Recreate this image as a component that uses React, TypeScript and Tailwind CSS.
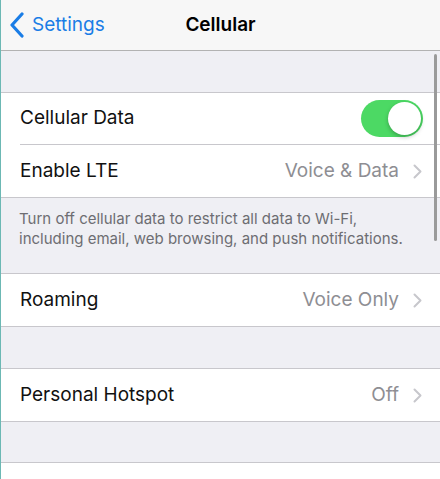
const font = { fontFamily: "Inter, 'Noto Sans', sans-serif" }

function Chevron() {
  return (
    <svg width="9" height="15" viewBox="0 0 9 15" fill="none" className="ml-[14px]">
      <path d="M1.5 1.5 L7.5 7.5 L1.5 13.5" stroke="#c7c7cc" strokeWidth="2" strokeLinecap="round" strokeLinejoin="round" />
    </svg>
  )
}

function Row({ label, detail }: { label: string; detail?: string }) {
  return (
    <div className="flex h-[52px] items-center pl-[19px] pr-[18px]">
      <span className="flex-1 text-[19px] text-[#111]">{label}</span>
      {detail && (
        <>
          <span className="text-[19px] text-[#8e8e93]">{detail}</span>
          <Chevron />
        </>
      )}
    </div>
  )
}

function Toggle() {
  return (
    <div className="flex h-[37px] w-[62px] items-center justify-end rounded-full bg-[#4cd964] p-[2px]">
      <div className="h-[33px] w-[33px] rounded-full bg-white shadow-[0_2px_4px_rgba(0,0,0,0.25)]" />
    </div>
  )
}

export default function App() {
  return (
    <div className="relative h-[479px] w-[440px] overflow-hidden border-l border-[#6cb8b4] bg-[#efeff4]" style={font}>
      {/* nav bar */}
      <div className="flex h-[51px] items-center border-b border-[#b2b2b2] bg-[#f7f7f7]">
        <div className="flex w-[140px] items-center pl-[8px] text-[#1a7de6]">
          <svg width="16" height="26" viewBox="0 0 16 26" fill="none">
            <path d="M13 2 L3 13 L13 24" stroke="currentColor" strokeWidth="3.2" strokeLinecap="round" strokeLinejoin="round" />
          </svg>
          <span className="ml-[7px] text-[19px]">Settings</span>
        </div>
        <div className="flex-1 pr-[140px] text-center text-[19px] font-semibold text-black">Cellular</div>
      </div>

      <div className="h-[41px]" />

      <div className="border-y border-[#c8c7cc] bg-white">
        <div className="flex h-[52px] items-center pl-[19px]">
          <div className="flex h-full flex-1 items-center border-b border-[#c8c7cc] pr-[17px]">
            <span className="flex-1 text-[19px] text-[#111]">Cellular Data</span>
            <Toggle />
          </div>
        </div>
        <Row label="Enable LTE" detail="Voice & Data" />
      </div>

      <p className="px-[18px] pt-[11px] pb-[24px] text-[15px] leading-[20px] text-[#6d6d72]">
        Turn off cellular data to restrict all data to Wi-Fi, including email, web browsing, and push notifications.
      </p>

      <div className="border-y border-[#c8c7cc] bg-white">
        <Row label="Roaming" detail="Voice Only" />
      </div>

      <div className="h-[41px]" />

      <div className="border-y border-[#c8c7cc] bg-white">
        <Row label="Personal Hotspot" detail="Off" />
      </div>

      <div className="h-[40px]" />

      <div className="border-t border-[#c8c7cc] bg-white">
        <div className="h-[52px]" />
      </div>

      {/* scroll indicator */}
      <div className="absolute top-[54px] right-[3px] h-[187px] w-[3px] rounded-full bg-[#9a9a9a]" />
    </div>
  )
}
